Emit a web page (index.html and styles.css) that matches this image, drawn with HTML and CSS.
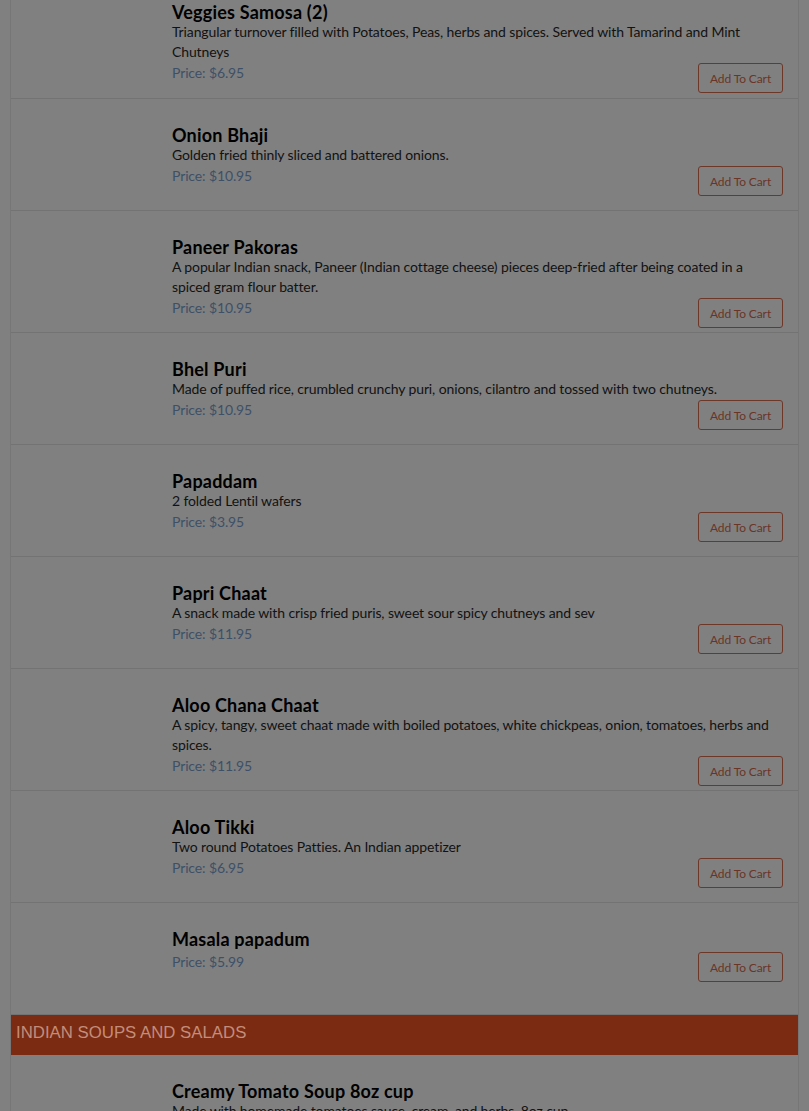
FILE: index.html
```html
<!DOCTYPE html>
<html lang="en">
<head>
<meta charset="utf-8">
<title>Menu</title>
<link rel="stylesheet" href="styles.css">
</head>
<body>
<div class="menu">
  <div class="item">
    <div class="thumb"></div>
    <div class="info">
      <h4 class="name">Veggies Samosa (2)</h4>
      <p class="desc">Triangular turnover filled with Potatoes, Peas, herbs and spices. Served with Tamarind and Mint Chutneys</p>
      <div class="buy"><span class="price">Price: $6.95</span><button class="cart">Add To Cart</button></div>
    </div>
  </div>
  <div class="item">
    <div class="thumb"></div>
    <div class="info">
      <h4 class="name">Onion Bhaji</h4>
      <p class="desc">Golden fried thinly sliced and battered onions.</p>
      <div class="buy"><span class="price">Price: $10.95</span><button class="cart">Add To Cart</button></div>
    </div>
  </div>
  <div class="item">
    <div class="thumb"></div>
    <div class="info">
      <h4 class="name">Paneer Pakoras</h4>
      <p class="desc">A popular Indian snack, Paneer (Indian cottage cheese) pieces deep-fried after being coated in a spiced gram flour batter.</p>
      <div class="buy"><span class="price">Price: $10.95</span><button class="cart">Add To Cart</button></div>
    </div>
  </div>
  <div class="item">
    <div class="thumb"></div>
    <div class="info">
      <h4 class="name">Bhel Puri</h4>
      <p class="desc">Made of puffed rice, crumbled crunchy puri, onions, cilantro and tossed with two chutneys.</p>
      <div class="buy"><span class="price">Price: $10.95</span><button class="cart">Add To Cart</button></div>
    </div>
  </div>
  <div class="item">
    <div class="thumb"></div>
    <div class="info">
      <h4 class="name">Papaddam</h4>
      <p class="desc">2 folded Lentil wafers</p>
      <div class="buy"><span class="price">Price: $3.95</span><button class="cart">Add To Cart</button></div>
    </div>
  </div>
  <div class="item">
    <div class="thumb"></div>
    <div class="info">
      <h4 class="name">Papri Chaat</h4>
      <p class="desc">A snack made with crisp fried puris, sweet sour spicy chutneys and sev</p>
      <div class="buy"><span class="price">Price: $11.95</span><button class="cart">Add To Cart</button></div>
    </div>
  </div>
  <div class="item">
    <div class="thumb"></div>
    <div class="info">
      <h4 class="name">Aloo Chana Chaat</h4>
      <p class="desc">A spicy, tangy, sweet chaat made with boiled potatoes, white chickpeas, onion, tomatoes, herbs and spices.</p>
      <div class="buy"><span class="price">Price: $11.95</span><button class="cart">Add To Cart</button></div>
    </div>
  </div>
  <div class="item">
    <div class="thumb"></div>
    <div class="info">
      <h4 class="name">Aloo Tikki</h4>
      <p class="desc">Two round Potatoes Patties. An Indian appetizer</p>
      <div class="buy"><span class="price">Price: $6.95</span><button class="cart">Add To Cart</button></div>
    </div>
  </div>
  <div class="item">
    <div class="thumb"></div>
    <div class="info">
      <h4 class="name">Masala papadum</h4>
      <div class="buy buy-gap"><span class="price">Price: $5.99</span><button class="cart">Add To Cart</button></div>
    </div>
  </div>
  <h3 class="section">INDIAN SOUPS AND SALADS</h3>
  <div class="item">
    <div class="thumb"></div>
    <div class="info">
      <h4 class="name">Creamy Tomato Soup 8oz cup</h4>
      <p class="desc">Made with homemade tomatoes sauce, cream, and herbs. 8oz cup</p>
      <div class="buy"><span class="price">Price: $4.95</span><button class="cart">Add To Cart</button></div>
    </div>
  </div>
</div>
</body>
</html>
```

FILE: styles.css
```css
html, body {
  margin: 0;
  padding: 0;
  background: #808080;
  overflow: hidden;
}

body {
  font-family: Lato, "Open Sans", sans-serif;
  color: #111111;
}

.menu {
  margin: -24px 10px 0 10px;
  border-left: 1px solid #767676;
  border-right: 1px solid #767676;
}

.item {
  display: flex;
  box-sizing: border-box;
  min-height: 112px;
  border-bottom: 1px solid #737373;
}

.item:first-child .info {
  padding-bottom: 5px;
}

.thumb {
  flex: 0 0 161px;
}

.info {
  flex: 1;
  padding: 26px 15px 4px 0;
}

.name {
  margin: 0;
  font-size: 18px;
  line-height: 20px;
  font-weight: 700;
  letter-spacing: 0.2px;
  color: #000000;
}

.desc {
  margin: 0;
  font-size: 14px;
  line-height: 20px;
  letter-spacing: -0.12px;
  color: #121212;
}

.buy {
  display: flex;
  justify-content: space-between;
  align-items: flex-start;
  margin-top: 1px;
}

.buy-gap {
  margin-top: 3px;
}

.price {
  font-size: 14px;
  line-height: 20px;
  letter-spacing: -0.12px;
  color: #3d5068;
}

.cart {
  box-sizing: border-box;
  width: 85px;
  height: 30px;
  padding: 0;
  background: transparent;
  border: 1px solid #6e3828;
  border-radius: 3px;
  font-family: Lato, "Open Sans", sans-serif;
  font-size: 12px;
  letter-spacing: -0.1px;
  color: #6b3526;
}

.section {
  margin: 0;
  height: 40px;
  box-sizing: border-box;
  padding: 8px 5px 0 5px;
  background: #7b2b12;
  font-family: "Liberation Sans", Arial, sans-serif;
  font-size: 16.8px;
  line-height: 20px;
  font-weight: 400;
  color: #c38d7b;
}
```
